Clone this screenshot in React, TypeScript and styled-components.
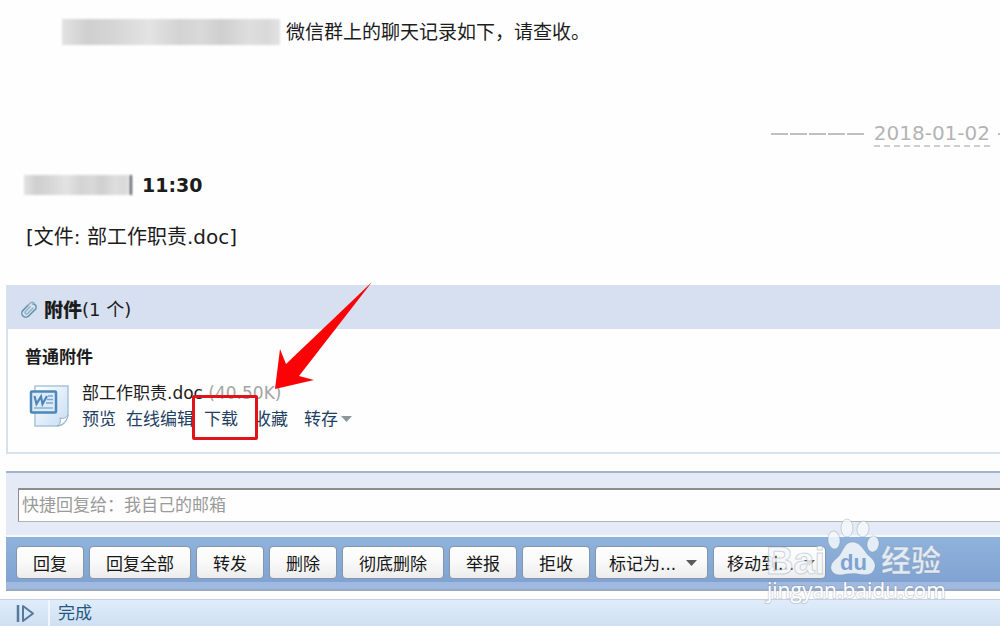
import React from "react";
import styled, { createGlobalStyle } from "styled-components";

const Global = createGlobalStyle`
  * { box-sizing: border-box; }
  body { margin: 0; background: #fefefe; color: #1c1c1c; overflow-x: hidden; }
  body, button, input, select { font-family: "DejaVu Sans", "Noto Sans CJK SC", sans-serif; }
`;

const Page = styled.div`
  position: relative;
  display: flex;
  flex-direction: column;
  min-height: 100vh;
  overflow: hidden;
`;

const Message = styled.main`
  display: flex;
  flex-direction: column;
  padding: 16px 0 0 24px;
  font-size: 19px;
  line-height: 32px;
  white-space: nowrap;
`;

const Line = styled.p`
  display: flex;
  align-items: center;
  margin: 0;
`;

const Opening = styled(Line)`
  padding-left: 38px;
  gap: 6px;
`;

const Hidden = styled.span<{ $w: number; $h: number; $edge?: boolean }>`
  width: ${(p) => p.$w}px;
  height: ${(p) => p.$h}px;
  border-right: ${(p) => (p.$edge ? "2px solid #4a5058" : "none")};
  filter: blur(1px);
  background: linear-gradient(90deg, #e2e2e2, #cfcfcf 12%, #d6d6d6 24%, #e3e3e3 40%, #d3d3d3 54%, #d9d9d9 64%, #cfcfcf 73%, #dedede 86%, #d9d9d9 94%, #e2e2e2);
`;

const DateLine = styled(Line)`
  justify-content: flex-end;
  gap: 8px;
  margin-top: 73px;
  font-size: 20px;
  color: #b4b4b4;
`;

const Dashes = styled.span`
  width: 95px;
  height: 2px;
  background: repeating-linear-gradient(90deg, #c0c0c0 0 17px, transparent 17px 19px);
`;

const MailDate = styled.time`
  line-height: 24px;
  border-bottom: 2px dashed #cfcfcf;
`;

const DashEnd = styled.span`
  width: 2px;
  height: 2px;
  background: #c0c0c0;
`;

const Sender = styled(Line)`
  margin-top: 22px;
  gap: 10px;
  font-weight: bold;
`;

const FileLine = styled(Line)`
  margin-top: 20px;
  padding-left: 2px;
  font-size: 20px;
`;

const Attachments = styled.section`
  margin: 32px 0 0 6px;
  border: solid #d6e1ee;
  border-width: 0 0 2px 2px;
  font-size: 17px;
  line-height: 26px;
  white-space: nowrap;
`;

const PanelHead = styled.h2`
  display: flex;
  align-items: center;
  margin: 0;
  height: 44px;
  padding: 6px 0 0 12px;
  background: #d6e0f0;
  font-size: 19px;
  b { margin-left: 6px; }
  span { font-size: 18px; font-weight: normal; }
`;

const PanelBody = styled.div`
  padding: 15px 0 20px 17px;
`;

const GroupName = styled.h3`
  margin: 0 0 10px;
  font-size: 17px;
`;

const FileItem = styled.div`
  position: relative;
  display: flex;
  align-items: center;
  gap: 12px;
  padding-left: 4px;
`;

const FileName = styled.div`
  color: #1c1c1c;
  span { color: #a4a4a4; }
`;

const Actions = styled.nav`
  display: flex;
  gap: 16px;
`;

const ActionGroup = styled.div`
  display: flex;
  gap: 10px;
`;

const Action = styled.a`
  color: #1f4161;
  text-decoration: none;
  display: flex;
  align-items: center;
  gap: 3px;
`;

const Marker = styled.div`
  position: absolute;
  left: 167px;
  top: 15px;
  width: 66px;
  height: 45px;
  border: 3px solid #e01318;
  border-radius: 2px;
`;

const Arrow = styled.svg`
  position: absolute;
  left: 249px;
  top: -99px;
`;

const QuickReply = styled.form`
  margin: 17px 0 0 6px;
  padding: 15px 0 13px 12px;
  border-top: 2px solid #a3b4cb;
  background: #e4ebf6;
`;

const ReplyInput = styled.input`
  display: block;
  width: calc(100% + 4px);
  height: 34px;
  padding: 0 3px 2px;
  border: 1px solid #b4b4b4;
  border-top: 2px solid #8d8d8d;
  border-left-color: #8d8d8d;
  background: #fefefe;
  font-size: 17px;
  &::placeholder { color: #9a9a9a; opacity: 1; }
`;

const Toolbar = styled.div`
  display: flex;
  gap: 5px;
  margin-left: 6px;
  padding: 9px 10px 10px;
  border-top: 2px solid #f4f9ff;
  border-bottom: 2px solid #9aaac4;
  background: linear-gradient(#8fb3db, #80a3d2 45px, #a0b9e0 45px);
`;

const buttonLook = `
  height: 33px;
  border: 1px solid #8795a8;
  border-radius: 4px;
  background: linear-gradient(#ffffff, #f9f9f9 50%, #ececec);
  color: #161616;
  font-size: 17px;
  line-height: 24px;
  white-space: nowrap;
`;

const ToolButton = styled.button`
  ${buttonLook}
  flex: none;
  padding: 2px 16px 0;
`;

const Drop = styled.label`
  display: grid;
  flex: none;
  align-items: center;
  > * { grid-area: 1 / 1; }
  svg { justify-self: end; margin-right: 11px; pointer-events: none; }
`;

const DropSelect = styled.select`
  ${buttonLook}
  appearance: none;
  width: 113px;
  padding: 2px 0 0 13px;
`;

const StatusBar = styled.footer`
  display: flex;
  flex: 1;
  min-height: 27px;
  margin-top: 8px;
  border-top: 1px solid #c6d1de;
  background: linear-gradient(#dfecfb, #cfe0f2);
  font-size: 17px;
  line-height: 26px;
  color: #24587f;
`;

const StatusIcon = styled.div`
  display: flex;
  align-items: center;
  width: 50px;
  padding-left: 16px;
  border-right: 2px solid #eff6fd;
`;

const StatusText = styled.span`
  padding-left: 8px;
`;

const Watermark = styled.svg`
  position: absolute;
  right: 40px;
  bottom: 16px;
  pointer-events: none;
`;

const Caret = ({ color }: { color: string }) => (
  <svg width="11" height="6" viewBox="0 0 11 6" aria-hidden="true">
    <path d="M0 0H11L5.5 6Z" fill={color} />
  </svg>
);

const Clip = () => (
  <svg width="18" height="18" viewBox="0 0 18 18" fill="none" aria-hidden="true">
    <g transform="rotate(45 9 9)" strokeLinecap="round" strokeWidth="1.5" stroke="#6491aa">
      <path d="M5 6V13.5a4 4 0 0 0 8 0V3.5a3.2 3.2 0 0 0-5.5-1.5" />
      <path d="M5 6V3.5a3 3 0 0 1 3-3" stroke="#8fb3c4" />
      <path d="M7.5 6V12.5a1.5 1.5 0 0 0 3 0V5" stroke="#8fb3c4" />
    </g>
  </svg>
);

const WordIcon = () => (
  <svg width="41" height="44" viewBox="0 0 41 44" aria-hidden="true">
    <defs>
      <linearGradient id="paper" x1="0" y1="0" x2="1" y2="1">
        <stop offset="0" stopColor="#ffffff" />
        <stop offset="1" stopColor="#c6ddf3" />
      </linearGradient>
    </defs>
    <path d="M6 2H39V31C38 37 34 42 28 42H6Z" fill="url(#paper)" stroke="#a9c3da" strokeWidth="1.5" />
    <path d="M39 31C37 34 34 35 31 34C32 38 31 41 28 42C34 41 38 37 39 31Z" fill="#ffffff" stroke="#8fb0cd" strokeWidth="1" />
    <rect x="2" y="7.5" width="25" height="21" rx="1" fill="#dcebf8" stroke="#4d86b8" strokeWidth="2.5" />
    <path d="M5.5 12L7.500 20L12 12.500L13.500 20L18 12" fill="none" stroke="#4f86b9" strokeWidth="2.2" />
    <path d="M19 12H24M18 15.5H24M17 19H24" stroke="#7ba6cf" strokeWidth="1.5" />
    <path d="M5 24H24" stroke="#8db3d6" strokeWidth="1.5" />
  </svg>
);

const PlayIcon = () => (
  <svg width="19" height="19" viewBox="0 0 19 19" fill="none" stroke="#56799c" strokeWidth="2" aria-hidden="true">
    <path d="M2 1V18" strokeWidth="2.5" />
    <path d="M7 2V17L17 9.5Z" strokeLinejoin="round" />
  </svg>
);

const tools = ["回复", "回复全部", "转发", "删除", "彻底删除", "举报", "拒收"];
const menus = ["标记为...", "移动到..."];

export default function App() {
  return (
    <Page>
      <Global />
      <Message>
        <Opening>
          <Hidden $w={218} $h={26} />
          微信群上的聊天记录如下，请查收。
        </Opening>
        <DateLine>
          <Dashes />
          <MailDate>2018-01-02</MailDate>
          <DashEnd />
        </DateLine>
        <Sender>
          <Hidden $w={108} $h={20} $edge />
          11:30
        </Sender>
        <FileLine>[文件: 部工作职责.doc]</FileLine>
      </Message>

      <Attachments>
        <PanelHead>
          <Clip />
          <b>附件</b>
          <span>(1 个)</span>
        </PanelHead>
        <PanelBody>
          <GroupName>普通附件</GroupName>
          <FileItem>
            <WordIcon />
            <div>
              <FileName>
                部工作职责.doc <span>(40.50K)</span>
              </FileName>
              <Actions>
                <ActionGroup>
                  <Action href="#">预览</Action>
                  <Action href="#">在线编辑</Action>
                  <Action href="#">下载</Action>
                </ActionGroup>
                <Action href="#">收藏</Action>
                <Action href="#">
                  转存
                  <Caret color="#8d969e" />
                </Action>
              </Actions>
            </div>
            <Marker />
            <Arrow width="98" height="110" viewBox="0 0 98 110" aria-hidden="true">
              <path d="M98 1L25 95L40 99L1 108L6 68L12 83Z" fill="#fb0207" />
            </Arrow>
          </FileItem>
        </PanelBody>
      </Attachments>

      <QuickReply>
        <ReplyInput aria-label="快捷回复" placeholder="快捷回复给：我自己的邮箱" />
      </QuickReply>
      <Toolbar>
        {tools.map((t) => (
          <ToolButton key={t}>{t}</ToolButton>
        ))}
        {menus.map((m) => (
          <Drop key={m}>
            <DropSelect aria-label={m}>
              <option>{m}</option>
            </DropSelect>
            <Caret color="#5a5a5a" />
          </Drop>
        ))}
      </Toolbar>
      <StatusBar>
        <StatusIcon>
          <PlayIcon />
        </StatusIcon>
        <StatusText>完成</StatusText>
      </StatusBar>

      <Watermark width="200" height="100" viewBox="0 0 200 100" aria-hidden="true">
        <g fill="#f4f8fc" fillOpacity="0.85" stroke="#7f8b99" strokeOpacity="0.35" strokeWidth="1">
          <text x="6" y="64" fontFamily="Liberation Sans, sans-serif" fontWeight="bold" fontSize="38">Bai</text>
          <ellipse cx="74" cy="30" rx="6" ry="9" transform="rotate(-6 74 30)" />
          <ellipse cx="87" cy="18" rx="6" ry="9" />
          <ellipse cx="103" cy="19" rx="6" ry="8" transform="rotate(8 103 19)" />
          <ellipse cx="113" cy="34" rx="6" ry="8" transform="rotate(8 113 34)" />
          <path d="M92 32C100 32 103 39 108 45C114 50 117 54 114 60C111 66 104 65 98 64C94 63 90 64 86 64C79 66 73 65 71 59C70 53 75 50 79 46C83 41 85 32 92 32Z" />
          <text x="121" y="61" fontFamily="Noto Sans CJK SC, sans-serif" fontWeight="bold" fontSize="30">经验</text>
        </g>
        <text x="7" y="88" fontFamily="Open Sans, sans-serif" fontSize="21" fill="#ffffff" stroke="#8793a3" strokeOpacity="0.35" strokeWidth="2" paintOrder="stroke">
          jingyan.baidu.com
        </text>
        <text x="80" y="60" fontFamily="Liberation Sans, sans-serif" fontWeight="bold" fontSize="22" fill="#7ea3d0">du</text>
      </Watermark>
    </Page>
  );
}
